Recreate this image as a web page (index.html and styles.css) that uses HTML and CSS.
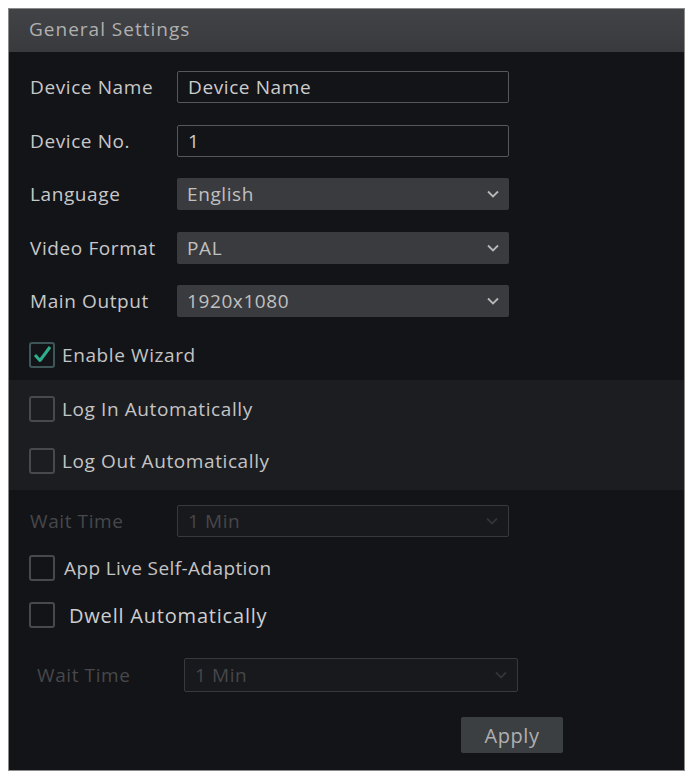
FILE: index.html
```html
<!DOCTYPE html>
<html>
<head>
<meta charset="utf-8">
<link rel="stylesheet" href="styles.css">
</head>
<body>
<div class="panel">
  <div class="header">General Settings</div>
  <div class="content">
    <div class="row">
      <span class="label">Device Name</span>
      <div class="field input">Device Name</div>
    </div>
    <div class="row">
      <span class="label">Device No.</span>
      <div class="field input">1</div>
    </div>
    <div class="row">
      <span class="label">Language</span>
      <div class="field select"><span>English</span>
        <svg class="chev" viewBox="0 0 12 8"><polyline points="1,1.5 6,6.5 11,1.5"/></svg></div>
    </div>
    <div class="row">
      <span class="label">Video Format</span>
      <div class="field select"><span>PAL</span>
        <svg class="chev" viewBox="0 0 12 8"><polyline points="1,1.5 6,6.5 11,1.5"/></svg></div>
    </div>
    <div class="row">
      <span class="label">Main Output</span>
      <div class="field select"><span>1920x1080</span>
        <svg class="chev" viewBox="0 0 12 8"><polyline points="1,1.5 6,6.5 11,1.5"/></svg></div>
    </div>
    <div class="check-row wizard">
      <span class="box checked"><svg viewBox="0 0 20 20"><polyline points="3,10 8,15.5 18,2"/></svg></span>
      <span class="ctext">Enable Wizard</span>
    </div>
    <div class="band">
      <div class="check-row">
        <span class="box"></span>
        <span class="ctext">Log In Automatically</span>
      </div>
      <div class="check-row">
        <span class="box"></span>
        <span class="ctext">Log Out Automatically</span>
      </div>
    </div>
    <div class="row disabled wait1">
      <span class="label">Wait Time</span>
      <div class="field select"><span>1 Min</span>
        <svg class="chev" viewBox="0 0 12 8"><polyline points="1,1.5 6,6.5 11,1.5"/></svg></div>
    </div>
    <div class="check-row app">
      <span class="box"></span>
      <span class="ctext">App Live Self-Adaption</span>
    </div>
    <div class="check-row dwell">
      <span class="box"></span>
      <span class="ctext">Dwell Automatically</span>
    </div>
    <div class="row disabled wait2">
      <span class="label">Wait Time</span>
      <div class="field select"><span>1 Min</span>
        <svg class="chev" viewBox="0 0 12 8"><polyline points="1,1.5 6,6.5 11,1.5"/></svg></div>
    </div>
    <div class="footer">
      <button class="apply">Apply</button>
    </div>
  </div>
</div>
</body>
</html>
```
FILE: styles.css
```css
html, body {
  margin: 0;
  padding: 0;
  background: #ffffff;
}
body {
  padding: 8px 5px 2px 8px;
  font-family: "Open Sans", "DejaVu Sans", sans-serif;
}
.panel {
  width: 675px;
  height: 761px;
  border: 1px solid #8a8a8a;
  background: #131418;
  display: flex;
  flex-direction: column;
}
.header {
  height: 43px;
  box-sizing: border-box;
  padding-bottom: 3px;
  background: linear-gradient(#424346, #393a3d);
  color: #b0b0b0;
  font-size: 19px;
  letter-spacing: 1px;
  display: flex;
  align-items: center;
  padding-left: 20px;
  flex: none;
}
.content {
  display: flex;
  flex-direction: column;
  padding-top: 17px;
}
.row {
  height: 36px;
  display: flex;
  align-items: center;
  padding-left: 21px;
  margin-bottom: 17.5px;
  color: #c8c8c8;
}
.label {
  width: 147px;
  font-size: 19px;
  letter-spacing: 0.6px;
  flex: none;
  white-space: nowrap;
}
.field {
  width: 332px;
  height: 32px;
  box-sizing: border-box;
  border-radius: 2px;
  display: flex;
  align-items: center;
  padding-left: 10px;
  font-size: 19px;
  letter-spacing: 0.6px;
  color: #cccccc;
}
.input {
  border: 1.5px solid #56575a;
  background: #131418;
}
.select {
  background: #3a3b3e;
  justify-content: space-between;
  padding-right: 10px;
  color: #c0c0c0;
}
.chev {
  width: 12px;
  height: 8px;
  fill: none;
  stroke: #b8b8b8;
  stroke-width: 1.8;
}
.check-row {
  height: 36px;
  display: flex;
  align-items: center;
  padding-left: 20px;
  color: #c4c4c4;
}
.box {
  width: 26px;
  height: 26px;
  box-sizing: border-box;
  border: 2px solid #48494c;
  border-radius: 3px;
  flex: none;
  display: flex;
  align-items: center;
  justify-content: center;
}
.box svg {
  width: 20px;
  height: 20px;
  fill: none;
  stroke: #2fae8e;
  stroke-width: 3;
  stroke-linejoin: round;
}
.box.checked {
  border-color: #3e5658;
}
.ctext {
  margin-left: 7px;
  font-size: 19px;
  letter-spacing: 0.6px;
  white-space: nowrap;
}
.wizard {
  margin-top: 0.5px;
}
.band {
  background: #1c1d20;
  margin-top: 7px;
  padding: 11px 0;
  display: flex;
  flex-direction: column;
  gap: 16px;
}
.wait1 {
  margin-top: 13px;
  margin-bottom: 0;
}
.disabled .label {
  color: #47484b;
}
.disabled .field {
  background: #18191c;
  border: 1.5px solid #38393c;
  color: #46474a;
}
.disabled .chev {
  stroke: #333437;
}
.app {
  margin-top: 11px;
}
.app .ctext {
  margin-left: 9px;
  letter-spacing: 0.4px;
}
.dwell {
  margin-top: 11px;
}
.dwell .ctext {
  margin-left: 14px;
  font-size: 20px;
  letter-spacing: 0.8px;
  color: #cecece;
}
.wait2 {
  margin-top: 24px;
  margin-bottom: 0;
  padding-left: 28px;
}
.wait2 .field {
  width: 334px;
  height: 34px;
}
.footer {
  display: flex;
  padding-left: 452px;
  margin-top: 24px;
}
.apply {
  width: 102px;
  height: 36px;
  border: none;
  border-radius: 2px;
  background: #3c3f41;
  color: #b0b0b0;
  font-family: "Open Sans", "DejaVu Sans", sans-serif;
  font-size: 20px;
  letter-spacing: 0.6px;
  padding: 0;
}
```
